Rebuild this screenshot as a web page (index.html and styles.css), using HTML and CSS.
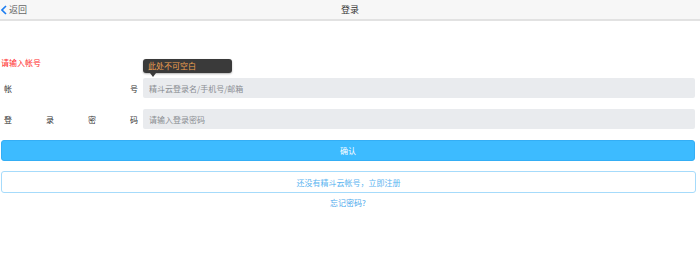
FILE: index.html
```html
<!DOCTYPE html>
<html lang="zh-CN">
<head>
    <meta charset="UTF-8">
    <meta name="viewport" content="width=device-width, initial-scale=1.0">
    <title>登录</title>
    <link rel="stylesheet" href="styles.css">
</head>
<body>
    <div class="header">
        <a class="back" href="#">
            <svg class="back-icon" width="6" height="10" viewBox="0 0 6 10">
                <path d="M5 1 L1 5 L5 9" fill="none" stroke="#1a7cf0" stroke-width="1.6"/>
            </svg>
            <span>返回</span>
        </a>
        <div class="title">登录</div>
    </div>

    <div class="form">
        <div class="error">请输入帐号</div>

        <div class="row row-account">
            <div class="label"><span>帐</span><span>号</span></div>
            <div class="field">
                <input class="input" type="text" placeholder="精斗云登录名/手机号/邮箱">
                <div class="tip">此处不可空白</div>
            </div>
        </div>

        <div class="row">
            <div class="label"><span>登</span><span>录</span><span>密</span><span>码</span></div>
            <div class="field">
                <input class="input" type="password" placeholder="请输入登录密码">
            </div>
        </div>

        <button class="btn-confirm">确认</button>
        <button class="btn-register">还没有精斗云帐号，立即注册</button>
        <a class="forgot" href="#">忘记密码?</a>
    </div>
</body>
</html>
```

FILE: styles.css
```css
body {
    margin: 0;
    padding: 0;
    background-color: #ffffff;
    font-family: "Noto Sans CJK SC", "Noto Sans", sans-serif;
    font-size: 9px;
    color: #333333;
}

.header {
    position: relative;
    height: 19px;
    background-color: #f7f7f7;
    border-bottom: 2px solid #e2e2e2;
    display: flex;
    align-items: center;
    justify-content: center;
}

.back {
    position: absolute;
    left: 1px;
    top: 0;
    height: 19px;
    display: flex;
    align-items: center;
    gap: 2px;
    color: #666666;
    text-decoration: none;
    font-size: 9px;
}

.back-icon {
    display: block;
}

.title {
    font-size: 9px;
    color: #333333;
}

.form {
    width: 694px;
    margin-left: 1px;
    padding-top: 36px;
    display: flex;
    flex-direction: column;
}

.error {
    color: #ff2a2a;
    font-size: 8px;
    line-height: 12px;
    height: 12px;
    margin-bottom: 5px;
}

.row {
    display: flex;
    align-items: center;
    margin-bottom: 11px;
}

.row-account {
    margin-top: 4px;
}

.label {
    width: 134px;
    margin-left: 3px;
    margin-right: 5px;
    display: flex;
    justify-content: space-between;
    font-size: 8px;
    color: #333333;
}

.field {
    position: relative;
    flex: 1;
}

.input {
    display: block;
    box-sizing: border-box;
    width: 100%;
    height: 20px;
    border: none;
    border-radius: 2px;
    background-color: #e9ebee;
    padding: 0 6px;
    font-family: "Noto Sans CJK SC", "Noto Sans", sans-serif;
    font-size: 8px;
    color: #333333;
    outline: none;
}

.input::placeholder {
    color: #8a8d92;
}

.tip {
    position: absolute;
    left: 0;
    bottom: 25px;
    width: 89px;
    height: 14px;
    box-sizing: border-box;
    padding-left: 5px;
    background-color: #3a3a3a;
    border-radius: 3px;
    box-shadow: 0 1px 2px rgba(0, 0, 0, 0.3);
    color: #f0a050;
    font-size: 8px;
    line-height: 14px;
}

.tip::after {
    content: "";
    position: absolute;
    left: 7px;
    bottom: -4px;
    border-left: 3px solid transparent;
    border-right: 3px solid transparent;
    border-top: 4px solid #3a3a3a;
}

.btn-confirm {
    height: 21px;
    border: 1px solid #34aef5;
    border-radius: 3px;
    background-color: #3dbbff;
    color: #ffffff;
    font-family: "Noto Sans CJK SC", "Noto Sans", sans-serif;
    font-size: 8px;
    margin-bottom: 10px;
    cursor: pointer;
}

.btn-register {
    width: 695px;
    height: 22px;
    border: 1px solid #a6dbfb;
    border-radius: 3px;
    background-color: #ffffff;
    color: #5ab4f0;
    font-family: "Noto Sans CJK SC", "Noto Sans", sans-serif;
    font-size: 8px;
    margin-bottom: 4px;
    cursor: pointer;
}

.forgot {
    align-self: center;
    color: #4aa8ec;
    text-decoration: none;
    font-size: 8px;
    line-height: 12px;
}
```
